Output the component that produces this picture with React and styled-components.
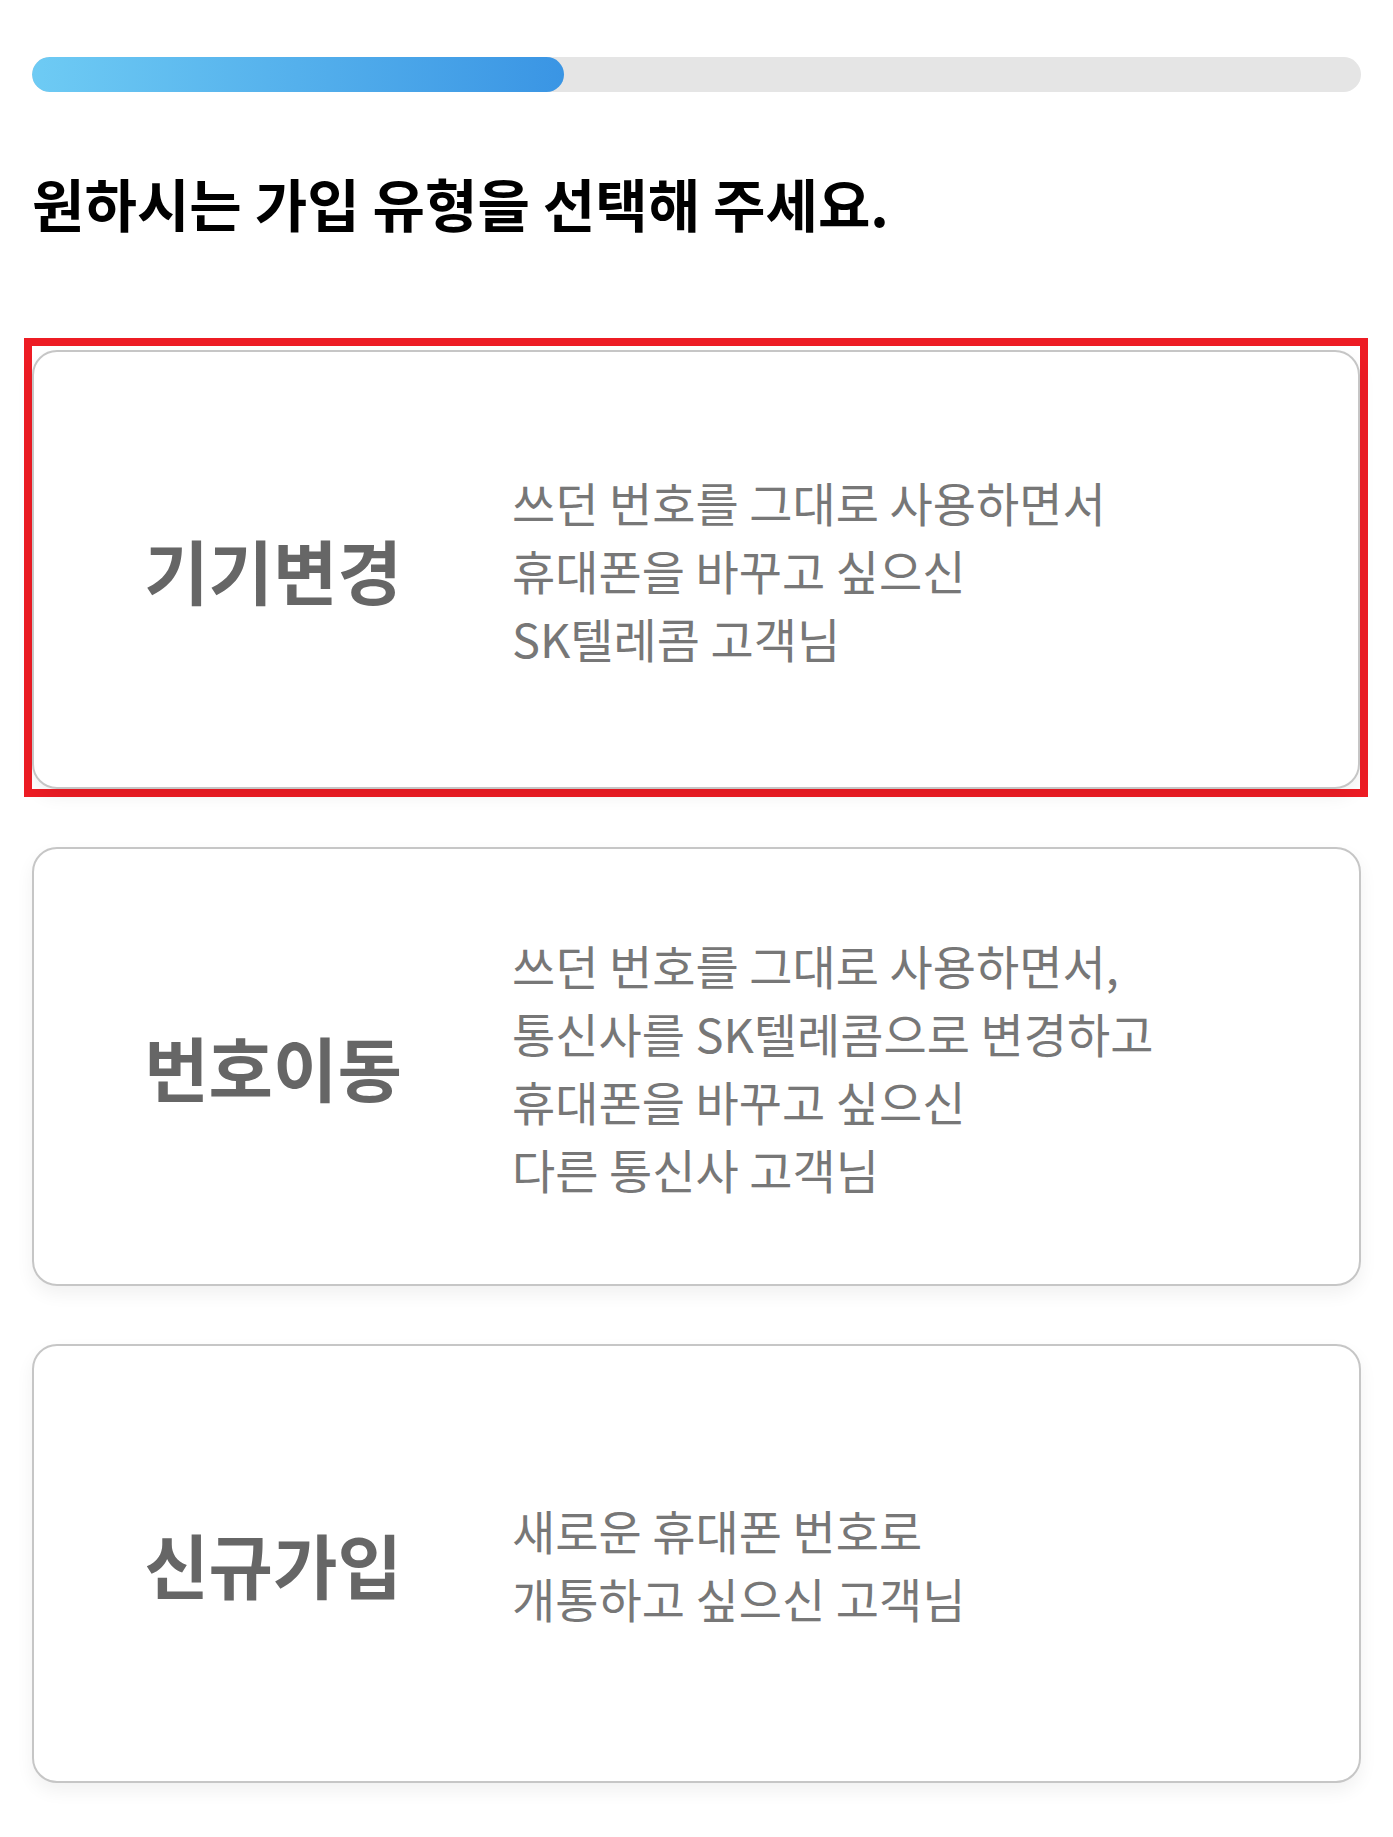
import React from "react";
import styled, { createGlobalStyle } from "styled-components";

const GlobalStyle = createGlobalStyle`
  html, body {
    margin: 0;
    padding: 0;
    background: #ffffff;
  }
  body {
    font-family: "Noto Sans CJK KR", "Noto Sans", sans-serif;
    color: #000;
  }
`;

const types = [
  {
    key: "change",
    title: "기기변경",
    lines: ["쓰던 번호를 그대로 사용하면서", "휴대폰을 바꾸고 싶으신", "SK텔레콤 고객님"],
    selected: true,
  },
  {
    key: "port",
    title: "번호이동",
    lines: [
      "쓰던 번호를 그대로 사용하면서,",
      "통신사를 SK텔레콤으로 변경하고",
      "휴대폰을 바꾸고 싶으신",
      "다른 통신사 고객님",
    ],
  },
  {
    key: "new",
    title: "신규가입",
    lines: ["새로운 휴대폰 번호로", "개통하고 싶으신 고객님"],
  },
];

function TypeOption({ title, lines }) {
  return (
    <TypeCard>
      <TypeName>{title}</TypeName>
      <TypeDesc>
        {lines.map((l, i) => (
          <span key={i}>{l}</span>
        ))}
      </TypeDesc>
    </TypeCard>
  );
}

export default function App() {
  const progress = 40;

  return (
    <>
      <GlobalStyle />
      <Page>
        <ProgressTrack>
          <ProgressFill style={{ width: `${progress}%` }} />
        </ProgressTrack>

        <Heading>원하시는 가입 유형을 선택해 주세요.</Heading>

        <CardList>
          {types.map((t) =>
            t.selected ? (
              <SelectedFrame key={t.key}>
                <TypeOption title={t.title} lines={t.lines} />
              </SelectedFrame>
            ) : (
              <TypeOption key={t.key} title={t.title} lines={t.lines} />
            )
          )}
        </CardList>
      </Page>
    </>
  );
}

const Page = styled.div`
  padding: 57px 32px 54px;
  box-sizing: border-box;
`;

const ProgressTrack = styled.div`
  height: 35px;
  border-radius: 18px;
  background: #e5e5e5;
  overflow: hidden;
`;

const ProgressFill = styled.div`
  height: 100%;
  border-radius: 18px;
  background: linear-gradient(90deg, #6ecbf4 0%, #3a95e4 100%);
`;

const Heading = styled.h1`
  margin: 74px 0 111px;
  font-size: 57px;
  line-height: 73px;
  font-weight: 700;
  color: #000;
  letter-spacing: 0;
`;

const CardList = styled.div`
  display: flex;
  flex-direction: column;
  gap: 58px;
`;

const SelectedFrame = styled.div`
  margin: -12px -7px -8px -8px;
  padding: 4px 0 0 0;
  border: 8px solid #ed1c24;
`;

const TypeCard = styled.div`
  display: grid;
  grid-template-columns: 478px 1fr;
  align-items: center;
  height: 439px;
  box-sizing: border-box;
  background: #fff;
  border: 2px solid #c6c6c6;
  border-radius: 25px;
  box-shadow: 0 8px 18px rgba(0, 0, 0, 0.06);
`;

const TypeName = styled.div`
  text-align: center;
  font-size: 70px;
  font-weight: 700;
  color: #666;
`;

const TypeDesc = styled.div`
  display: flex;
  flex-direction: column;
  font-size: 47px;
  line-height: 68px;
  font-weight: 400;
  color: #777;
`;
